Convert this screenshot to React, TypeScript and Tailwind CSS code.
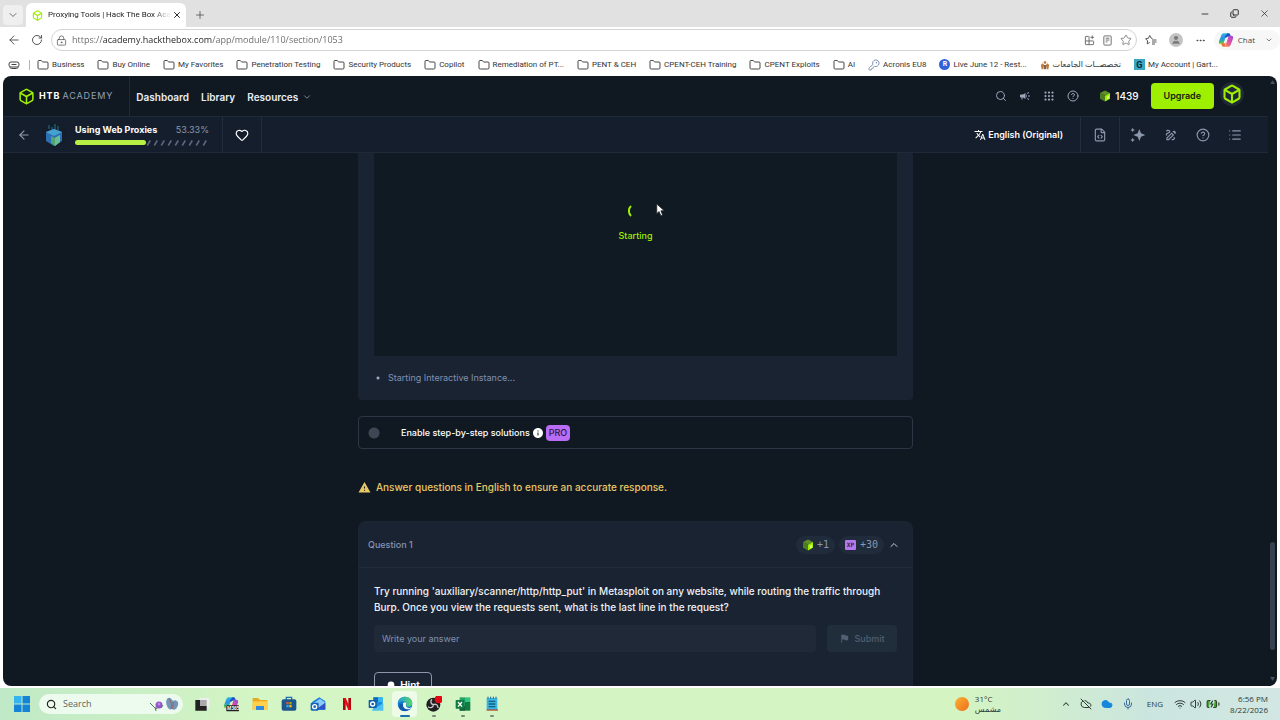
import { type ReactNode } from 'react'
import { BatteryCharging, Box, ChevronDown, ChevronUp, CircleHelp, Cloud, CloudOff, Ellipsis, FileCode, Folder, Grip, Heart, List, Mic, Minus, Plus, RotateCw, Search, Star, Volume2, Wifi, X, ArrowLeft, LockKeyhole, Copy, KeyRound, User } from 'lucide-react'
import { MdCampaign, MdFlag, MdInfo, MdOutlineDraw, MdTranslate, MdWarning } from 'react-icons/md'

const folders = ['Business', 'Buy Online', 'My Favorites', 'Penetration Testing', 'Security Products', 'Copilot', 'Remediation of PT...', 'PENT & CEH', 'CPENT-CEH Training', 'CPENT Exploits', 'AI']

function IconBtn({ label, children, className = '' }: { label: string; children: ReactNode; className?: string }) {
  return <button type="button" aria-label={label} className={`grid shrink-0 place-items-center ${className}`}>{children}</button>
}

function Cube({ className = '' }: { className?: string }) {
  return (
    <svg viewBox="0 0 24 24" className={className}>
      <path d="M12 1l10 5.200-10 5.400L2 6.200z" fill="#5f8f2a" />
      <path d="M2 6.200l10 5.400V23L2 17.500z" fill="#4d7d22" />
      <path d="M22 6.200l-10 5.400V23l10-5.500z" fill="#9fef00" />
      <path d="M16 13.500l4-2.200v5.200l-4 2.300z" fill="#e0ff8a" />
    </svg>
  )
}

function CopilotLogo({ className = '' }: { className?: string }) {
  return (
    <svg viewBox="0 0 24 24" className={className}>
      <defs>
        <linearGradient id="copA" x1="0" y1="0" x2="0" y2="1"><stop stopColor="#28b5e8" /><stop offset=".5" stopColor="#2f8fe0" /><stop offset=".8" stopColor="#35c06b" /><stop offset="1" stopColor="#e8c93a" /></linearGradient>
        <linearGradient id="copB" x1="1" y1="0" x2="0" y2="1"><stop stopColor="#8a4be8" /><stop offset=".5" stopColor="#e44fa0" /><stop offset="1" stopColor="#ff9a3c" /></linearGradient>
      </defs>
      <path d="M16 2H8.500C6.500 2 5.300 3.500 4.700 5.500L1.500 14c-.9 3 .4 4.500 2.500 4.500H8l4-12.500c.5-1.600 1.700-4 4-4z" fill="url(#copA)" />
      <path d="M14 2h1.500c1.700 0 2.600 1 3 2.500L19.300 7H15c-2 0-2.600 1-3 2.200l-2-2z" fill="#1d4fc4" />
      <path d="M8 22h7.500c2 0 3.200-1.500 3.800-3.500L22.500 10c.9-3-.4-4.500-2.500-4.500H16l-4 12.500c-.5 1.600-1.700 4-4 4z" fill="url(#copB)" />
      <path d="M10 22H8.500c-1.700 0-2.600-1-3-2.500L5 17h4c2 0 2.400-1 3-2.500z" fill="#f0703a" />
    </svg>
  )
}

function Bookmark({ icon, children, dir }: { icon: ReactNode; children: ReactNode; dir?: 'rtl' }) {
  return (
    <a href="#" className="flex shrink-0 items-center gap-[3px] text-[#333]">
      {icon}
      <span dir={dir}>{children}</span>
    </a>
  )
}

function BrowserChrome() {
  return (
    <header className="shrink-0 bg-white font-['Open_Sans','Noto_Sans','DejaVu_Sans',sans-serif] text-[8px] text-[#444]">
      <div className="flex h-[27px] items-end justify-between bg-[#e1e1e1]">
        <div className="flex h-6 items-center">
          <IconBtn label="Tab actions" className="ml-[3px] mr-[3px] h-5 w-5 rounded bg-[#efefef]"><ChevronDown className="h-3 w-3" strokeWidth={1.500} /></IconBtn>
          <div className="flex h-full w-40 items-center rounded-t-md bg-white pl-[6px] pr-1 font-[Roboto,sans-serif] text-[#222]">
            <Box className="h-[11px] w-[11px] shrink-0 text-[#9fef00]" strokeWidth={2.500} />
            <span className="ml-[5px] flex-1 whitespace-nowrap [mask-image:linear-gradient(90deg,#000_85%,transparent)]">Proxying Tools | Hack The Box Aca</span>
            <IconBtn label="Close tab" className="h-3 w-3 text-black"><X className="h-[10px] w-[10px]" /></IconBtn>
          </div>
          <IconBtn label="New tab" className="ml-2 h-3 w-3"><Plus className="h-3 w-3" strokeWidth={1.500} /></IconBtn>
        </div>
        <div className="flex h-full items-center gap-5 pr-[10px] text-[#222]">
          <IconBtn label="Minimize"><Minus className="h-[10px] w-[10px]" /></IconBtn>
          <IconBtn label="Restore"><Copy className="h-[9px] w-[9px] -scale-y-100" strokeWidth={2.500} /></IconBtn>
          <IconBtn label="Close"><X className="h-[11px] w-[11px]" strokeWidth={1.500} /></IconBtn>
        </div>
      </div>

      <div className="flex h-[26px] items-center pl-[7px]">
        <IconBtn label="Back"><ArrowLeft className="h-[14px] w-[14px]" strokeWidth={1.500} /></IconBtn>
        <IconBtn label="Refresh" className="ml-[10px]"><RotateCw className="h-3 w-3" strokeWidth={1.800} /></IconBtn>
        <div className="ml-2 flex h-[22px] flex-1 items-center rounded-full border border-[#d4d4d4] pl-1 pr-1">
          <LockKeyhole className="h-[11px] w-[11px] shrink-0" strokeWidth={1.500} />
          <input aria-label="Address" defaultValue="https://academy.hackthebox.com/app/module/110/section/1053"
            className="ml-[5px] min-w-0 flex-1 bg-[linear-gradient(90deg,#666_31px,#222_31px_140px,#666_140px)] bg-clip-text text-[9px] text-transparent outline-none" />
          <div className="flex gap-[7px] text-[#666]">
            <IconBtn label="Apps">
              <svg viewBox="0 0 24 24" className="h-[11px] w-[11px]" fill="none" stroke="currentColor" strokeWidth="2"><path d="M10 3H4a1 1 0 0 0-1 1v16a1 1 0 0 0 1 1h16a1 1 0 0 0 1-1v-6a1 1 0 0 0-1-1H3M11 3v18M18 1v8M14 5h8" /></svg>
            </IconBtn>
            <IconBtn label="Reader">
              <svg viewBox="0 0 24 24" className="h-[11px] w-[11px]" fill="none" stroke="currentColor" strokeWidth="2"><rect x="4" y="2" width="16" height="20" rx="2" /><path d="M8 7h8M8 11h8M8 15h4" /></svg>
            </IconBtn>
            <IconBtn label="Favorite"><Star className="h-3 w-3" strokeWidth={1.500} /></IconBtn>
          </div>
        </div>
        <div className="flex items-center gap-3 pl-2">
          <IconBtn label="Favorites">
            <svg viewBox="0 0 24 24" className="h-3 w-3" fill="none" stroke="currentColor" strokeWidth="1.800" strokeLinejoin="round"><path d="M15 9l-2.500-.5L9.500 3 6.700 8.500l-5.500 1 4 4.200-.8 6L9.500 17M14 12h9M14 16h9M14 20h6" /></svg>
          </IconBtn>
          <IconBtn label="Profile" className="h-[14px] w-[14px] overflow-hidden rounded-full bg-[#c4c4c4] text-[#7b7b7b]"><User className="h-[10px] w-[10px]" fill="currentColor" /></IconBtn>
          <IconBtn label="More"><Ellipsis className="h-[11px] w-[11px]" /></IconBtn>
        </div>
        <button type="button" className="ml-2 flex h-5 items-center rounded-full bg-[#f7f7f7] pl-1 pr-[7px]">
          <CopilotLogo className="h-4 w-4" />
          <span className="ml-1">Chat</span>
          <ChevronDown className="ml-[10px] h-2 w-2" />
        </button>
      </div>

      <nav className="flex h-[23px] items-center gap-[13px] overflow-hidden whitespace-nowrap pl-2 font-[Roboto,'DejaVu_Sans',sans-serif]">
        <IconBtn label="Workspaces" className="-mr-1">
          <svg viewBox="0 0 24 24" className="h-3 w-3" fill="none" stroke="currentColor" strokeWidth="2"><rect x="2" y="6" width="20" height="10" rx="4" /><path d="M7 11h10M4 16c0 2 1 3 3 3h10c2 0 3-1 3-3" /></svg>
        </IconBtn>
        <span className="-mr-[6px] h-[10px] w-px bg-[#b5b5b5]" />
        {folders.map((f) => (
          <Bookmark key={f} icon={<Folder className="h-3 w-3" strokeWidth={1.800} />}>{f}</Bookmark>
        ))}
        <Bookmark icon={<KeyRound className="h-3 w-3 text-[#7e8fb3]" />}>Acronis EU8</Bookmark>
        <Bookmark icon={<span className="grid h-[11px] w-[11px] place-items-center rounded-full bg-[#2f62d9] text-[7px] font-bold text-white">R</span>}>Live June 12 - Rest...</Bookmark>
        <Bookmark dir="rtl" icon={<svg viewBox="0 0 12 12" className="h-[10px] w-[10px]"><path d="M6 1l2 2-2 2-2-2zM3 4l2 2-1 5H2L1 6zM9 4L7 6l1 5h2l1-5z" fill="#c07a3a" /><path d="M5 6h2v5H5z" fill="#5b4a3c" /></svg>}>تخصصــات الجامعات</Bookmark>
        <Bookmark icon={<span className="grid h-[11px] w-[11px] place-items-center bg-[#3aa6c4] text-[9px] font-bold text-[#06263c]">G</span>}>My Account | Gart...</Bookmark>
      </nav>
    </header>
  )
}

function SiteHeader() {
  return (
    <header className="flex h-[41px] shrink-0 items-center border-b border-[#1f2a38]">
      <a href="#" className="flex h-full items-center border-r border-[#1f2a38] pl-[15px] pr-4 text-[9px] tracking-widest">
        <Box className="mr-1 h-[17px] w-[17px] text-[#9fef00]" strokeWidth={2.200} />
        <b className="mr-[2px] text-white">HTB</b><span className="text-[#94a0b5]">ACADEMY</span>
      </a>
      <nav className="flex items-center gap-3 pl-[6px] pt-[2px] text-[10px] font-semibold text-[#e8edf5]">
        <a href="#">Dashboard</a>
        <a href="#">Library</a>
        <button type="button" className="flex items-center gap-1">Resources <ChevronDown className="h-[10px] w-[10px] text-[#8b97ab]" /></button>
      </nav>
      <div className="ml-auto flex items-center gap-3 pr-6 text-[#9aa6ba]">
        <IconBtn label="Search"><Search className="h-3 w-3" /></IconBtn>
        <IconBtn label="News"><MdCampaign className="h-3 w-3" /></IconBtn>
        <IconBtn label="Apps"><Grip className="h-3 w-3" strokeWidth={2.500} /></IconBtn>
        <IconBtn label="Help"><CircleHelp className="h-3 w-3" /></IconBtn>
        <span className="ml-2 flex items-center gap-1 text-[10px] font-medium text-white"><Cube className="h-3 w-3" />1439</span>
        <button type="button" className="h-[26px] rounded-sm bg-[#9fef00] px-[13px] text-[9px] font-semibold text-[#16240b]">Upgrade</button>
        <IconBtn label="Account" className="-ml-[6px] mb-1 h-6 w-6 rounded-full bg-[#1f2937] text-[#9fef00]"><Box className="h-5 w-5" strokeWidth={2.500} /></IconBtn>
      </div>
    </header>
  )
}

function ModuleBar() {
  return (
    <div className="flex h-9 shrink-0 items-center border-b border-[#1f2a38] bg-[#151e2d] text-[#8b97ab]">
      <IconBtn label="Back" className="ml-[14px]"><ArrowLeft className="h-[14px] w-[14px]" /></IconBtn>
      <svg viewBox="0 0 24 24" className="ml-[11px] h-6 w-6">
        <circle cx="12" cy="12" r="12" fill="#141d29" />
        <path d="M7 2v4M10 4v3M13 1v5M16 3v4" stroke="#20697d" strokeWidth="1.200" />
        <path d="M12 6l8 3v9l-8 5-8-5V9z" fill="#2d6fb5" />
        <path d="M12 6l8 3-8 4-8-4z" fill="#45a1cf" />
        <path d="M9 13l4 2 5-3v7l-5 4-4-3z" fill="#4fa673" />
        <path d="M13 15l5-3v7l-5 4z" fill="#69bd97" />
      </svg>
      <div className="ml-[9px] w-[134px]">
        <div className="flex justify-between text-[9px] leading-3">
          <span className="font-bold text-white">Using Web Proxies</span><span>53.33%</span>
        </div>
        <div role="progressbar" aria-label="Module progress" aria-valuenow={53} className="mt-1 flex h-[6px] items-center">
          <div className="h-[5px] rounded-full bg-[#b5f043]" style={{ width: '53.330%' }} />
          <svg viewBox="0 0 62 6" className="h-[6px] flex-1" stroke="#5d6b80" strokeWidth="1.500">
            {[0, 1, 2, 3, 4, 5, 6, 7, 8].map((i) => <path key={i} d={`M${i * 7 + 1} 5.500l3-5`} />)}
          </svg>
        </div>
      </div>
      <div className="ml-[13px] flex h-full items-center border-x border-[#222d3d] px-3">
        <IconBtn label="Like"><Heart className="h-[14px] w-[14px] text-white" /></IconBtn>
      </div>
      <div className="ml-auto flex h-full items-center">
        <button type="button" className="mr-[17px] flex items-center gap-[2px] text-[9px] font-semibold text-white"><MdTranslate className="h-3 w-3" />English (Original)</button>
        <div className="flex h-full items-center border-x border-[#222d3d] px-3">
          <IconBtn label="Cheat sheet"><FileCode className="h-[14px] w-[14px]" /></IconBtn>
        </div>
        <div className="flex items-center gap-[18px] pl-[10px] pr-[26px]">
          <IconBtn label="Assistant">
            <svg viewBox="0 0 24 24" className="h-4 w-4" fill="currentColor"><path d="M14 3l2.500 6.500L23 12l-6.500 2.500L14 21l-2.500-6.500L5 12l6.500-2.500zM4 1l1 2.500L7.500 4.500 5 5.500 4 8 3 5.500.5 4.500 3 3.500zM4 16l1 2.500 2.500 1L5 20.500 4 23l-1-2.500-2.500-1 2.500-1z" /></svg>
          </IconBtn>
          <IconBtn label="Notes"><MdOutlineDraw className="h-[14px] w-[14px]" /></IconBtn>
          <IconBtn label="Help"><CircleHelp className="h-[14px] w-[14px]" /></IconBtn>
          <IconBtn label="Contents"><List className="h-[14px] w-[14px]" /></IconBtn>
        </div>
      </div>
    </div>
  )
}

function Instance() {
  return (
    <section className="rounded-b bg-[#1a2332] px-4">
      <div className="relative flex h-[203px] flex-col items-center bg-[#101a23] pt-[52px] text-[#9fef00]">
        <svg viewBox="0 0 12 12" className="mr-[10px] h-3 w-3" fill="none" stroke="currentColor" strokeWidth="2"><path d="M6 1C3.200 3.500 3.200 8.500 6 11" /></svg>
        <span className="mt-3 text-[9px] font-medium">Starting</span>
        <svg viewBox="0 0 12 18" className="absolute left-[282px] top-[50px] h-[14px] w-[9px]"><path d="M1 1v13l3-3 2.500 5.500 2.300-1L6.500 10H11z" fill="#fff" stroke="#222" /></svg>
      </div>
      <p className="flex h-11 items-center gap-[6px] text-[9px] text-[#8291b0]">
        <span className="mx-[2px] h-1 w-1 rounded-full border border-[#46536a] bg-[#c6d0e2]" />Starting Interactive Instance...
      </p>
    </section>
  )
}

function Question() {
  return (
    <section className="mt-[26px] rounded-t-lg border border-b-0 border-[#1b2533] bg-[#1a2332]">
      <div className="ml-[9px] mr-3 flex h-[45px] items-center">
        <h2 className="text-[9px] font-medium text-[#8593b3]">Question 1</h2>
        <div className="ml-auto flex items-center gap-1 font-['DejaVu_Sans_Mono',monospace] text-[10px] text-[#8b97ab]">
          <span className="flex h-[18px] items-center gap-[3px] rounded-full bg-[#202b3b] px-[6px]"><Cube className="h-3 w-3" />+1</span>
          <span className="flex h-[18px] items-center gap-1 rounded-full bg-[#202b3b] px-[6px]">
            <span className="grid h-[10px] w-[11px] place-items-center rounded-[1px] bg-[#b678ee] text-[6px] font-bold text-[#32204a]">XP</span>+30
          </span>
          <IconBtn label="Collapse"><ChevronUp className="h-3 w-3 text-[#c4cddc]" /></IconBtn>
        </div>
      </div>
      <div className="border-t border-[#202b3b] px-[15px] pt-[15px]">
        <label htmlFor="answer" className="block text-[10px] font-medium leading-4 text-[#eef2f8]">
          Try running 'auxiliary/scanner/http/http_put' in Metasploit on any website, while routing the traffic through Burp. Once you view the requests sent, what is the last line in the request?
        </label>
        <div className="mt-[10px] flex gap-[11px]">
          <input id="answer" placeholder="Write your answer" className="h-[27px] min-w-0 flex-1 rounded-sm bg-[#1f2937] px-2 text-[9px] outline-none placeholder:text-[#8291b0]" />
          <button type="button" className="flex h-[27px] w-[70px] items-center justify-center gap-1 rounded-sm bg-[#202d3b] text-[9px] font-medium text-[#526074]"><MdFlag className="h-[11px] w-[11px]" />Submit</button>
        </div>
        <button type="button" className="mt-5 flex h-[27px] w-[58px] items-center justify-center gap-1 rounded-sm border border-[#8b97ab] text-[10px] font-semibold text-white">
          <svg viewBox="0 0 12 12" className="h-[10px] w-[10px]" fill="currentColor"><circle cx="6" cy="4.500" r="4" /><path d="M4 9h4v2H4z" /></svg>Hint
        </button>
      </div>
    </section>
  )
}

function Site() {
  return (
    <div className="mx-[3px] mb-[2px] flex min-h-0 flex-1 overflow-hidden rounded-lg bg-[#101922] font-[Inter,'Liberation_Sans',sans-serif]">
      <div className="flex min-w-0 flex-1 flex-col">
        <SiteHeader />
        <ModuleBar />
        <main className="min-h-0 flex-1 overflow-hidden">
          <div className="mx-auto max-w-[555px]">
            <Instance />
            <div className="mt-4 flex h-[33px] items-center rounded border border-[#2b3745] px-[9px] text-[9px] font-medium text-white">
              <input id="steps" type="checkbox" role="switch" className="h-3 w-[24px] appearance-none rounded-full bg-[radial-gradient(circle_at_6px_6px,#3d4653_5px,transparent_6px)]" />
              <label htmlFor="steps" className="ml-[9px]">Enable step-by-step solutions</label>
              <MdInfo className="ml-[2px] h-3 w-3" />
              <span className="ml-[2px] rounded-sm bg-[#b96cf5] px-[3px] leading-4 text-[#2c1546]">PRO</span>
            </div>
            <p className="mt-[30px] flex items-center gap-[5px] text-[10px] font-medium leading-4 text-[#e8c765]"><MdWarning className="h-[13px] w-[13px]" />Answer questions in English to ensure an accurate response.</p>
            <Question />
          </div>
        </main>
      </div>
      <div className="flex w-[9px] shrink-0 flex-col items-center justify-between py-1 text-[5px] leading-none text-[#465362]">
        <span>▲</span>
        <div className="mt-[430px] h-[108px] w-[5px] rounded-full bg-[#36424f]" />
        <span>▼</span>
      </div>
    </div>
  )
}

// Taskbar app icons, all drawn on a 24 grid
const apps: { name: string; icon: ReactNode; running?: boolean; active?: boolean }[] = [
  { name: 'Task view', icon: <><path d="M8 3h15v14H8z" fill="#eee" /><path d="M2 6h7v9h10v7H2z" fill="#222" /><path d="M9 6h10v9H9z" fill="#aaa" /></> },
  { name: 'Microsoft 365 Copilot', icon: <><CopilotLogo /><rect x="5" y="14" width="19" height="9" rx="1" fill="#222" /><text x="6" y="21.500" fontSize="7" fontWeight="700" fill="#fff">M365</text></> },
  { name: 'File Explorer', icon: <><path d="M1 3h8l3 3h11v15H1z" fill="#e8a91c" /><path d="M1 8h22v13H1z" fill="#ffd04e" /><path d="M6 15h12v6H6z" fill="#2f8be0" /></> },
  { name: 'Microsoft Store', icon: <><path d="M8 6V2h8v4" fill="none" stroke="#1f6fb5" strokeWidth="2" /><rect x="1" y="5" width="22" height="17" rx="3" fill="#1d568c" /><path d="M8 9h3.500v3.500H8z" fill="#f25022" /><path d="M12.500 9H16v3.500h-3.500z" fill="#7fba00" /><path d="M8 13.500h3.500V17H8z" fill="#29a8ea" /><path d="M12.500 13.500H16V17h-3.500z" fill="#ffb900" /></> },
  { name: 'Outlook', icon: <><path d="M3 9l11-7 9 6v13H8z" fill="#1a7ee0" /><path d="M6 10l9-6 8 6-10 8z" fill="#8ccaf7" /><path d="M8 21l15-11v10H8z" fill="#3153c7" /><rect x="1" y="10" width="12" height="12" rx="2" fill="#1464b8" /><circle cx="7" cy="16" r="3" fill="none" stroke="#fff" strokeWidth="2" /></> },
  { name: 'Netflix', icon: <><path d="M6 3h4v18H6zM14 3h4v18h-4z" fill="#b1060f" /><path d="M6 3h4l8 18h-4z" fill="#e50914" /></> },
  { name: 'Outlook classic', icon: <><path d="M8 2h14v19H8z" fill="#1490df" /><path d="M8 2h7v7H8z" fill="#0f6cbd" /><path d="M15 2h7v7h-7z" fill="#35b8f1" /><path d="M6 21l17-10v11H6z" fill="#50c0f0" /><rect x="1" y="6" width="12" height="12" rx="1" fill="#0f5ea8" /><circle cx="7" cy="12" r="3" fill="none" stroke="#fff" strokeWidth="2" /></> },
  { name: 'Edge', active: true, icon: <><defs><linearGradient id="edgeG" x1="0" y1="0" x2="1" y2="0"><stop stopColor="#1e9de0" /><stop offset="1" stopColor="#5ad565" /></linearGradient></defs><circle cx="12" cy="12" r="11" fill="#1479cc" /><path d="M1 11C2 4 7 1 12 1c7 0 11 5 11 9 0 4-3 6-6 6-2 0-4-1-3-3 1-3-2-5-5-5-4 0-7 2-8 3z" fill="url(#edgeG)" /><path d="M9 11c-2 5 2 10 8 9 2 0 4-1 5-3-3 2-6 1-7.500-.5C13 15 13 13 14 12c0-3-3-4-5-1z" fill="#e7f7ef" /><path d="M9 12c-1 5 3 9 9 8-5 5-14 2-15-4 0-3 2-5 6-4z" fill="#1457a6" /></> },
  { name: 'OBS Studio', running: true, icon: <><circle cx="11" cy="13" r="10.500" fill="#1f1f22" /><path d="M11 13c-4-1-5-5-2-8M11 13c4-2 7 1 7 5M11 13c0 4-4 6-8 3" fill="none" stroke="#c8c8c8" strokeWidth="2" /><circle cx="19" cy="5" r="6" fill="#e30613" /></> },
  { name: 'Excel', running: true, icon: <><path d="M7 2h8v20H7z" fill="#21a366" /><path d="M15 2h8v7h-8z" fill="#33c481" /><path d="M15 9h8v13h-8z" fill="#107c41" /><path d="M7 15h8v7H7z" fill="#185c37" /><rect x="1" y="6" width="13" height="13" rx="1" fill="#107c41" /><path d="M4.500 9l6 7M10.500 9l-6 7" stroke="#fff" strokeWidth="2" /></> },
  { name: 'Notepad', running: true, icon: <><path d="M4 3h16v18H4z" fill="#3bb3e3" /><path d="M4 20h17v2H4z" fill="#b04a32" /><path d="M6 1v3M10 1v3M14 1v3M18 1v3" stroke="#1d6584" strokeWidth="1.500" /><path d="M7 8h10M7 12h10M7 16h10" stroke="#12617f" strokeWidth="2" /></> },
]

function Taskbar() {
  return (
    <footer className="flex h-8 shrink-0 items-center bg-[linear-gradient(90deg,#bfe9c6,#d4f5c4_20%,#d4f4c2_75%,#cbe5df_90%,#d2e7e3)] font-['Open_Sans','Noto_Sans','DejaVu_Sans',sans-serif] text-[8px] text-[#2e3b36]">
      <IconBtn label="Start" className="ml-[14px]">
        <svg viewBox="0 0 16 16" className="h-4 w-4" fill="#1583d6"><path d="M0 0h7.500v7.500H0z" fill="#35b5ef" /><path d="M8.500 0H16v7.500H8.500zM0 8.500h7.500V16H0zM8.500 8.500H16V16H8.500z" /></svg>
      </IconBtn>
      <label className="ml-[9px] flex h-5 w-36 items-center rounded-full bg-[#edfaee] pl-[7px] pr-1">
        <Search className="h-[11px] w-[11px] shrink-0 text-[#222]" strokeWidth={2.500} />
        <input aria-label="Search" placeholder="Search" className="ml-[6px] min-w-0 flex-1 text-[9px] outline-none placeholder:text-[#5c6661]" />
        <svg viewBox="0 0 30 16" className="h-4 w-[30px] shrink-0">
          <path d="M1 7l6 6 4-3M7 15l-1-4M12 12l2-3" fill="none" stroke="#45814e" />
          <circle cx="10" cy="9" r="3.500" fill="#9356c7" /><circle cx="10" cy="8" r="1.500" fill="#b88ae0" />
          <path d="M18 10c-2-5 0-9 3-8 1 0 2 2 3 3 3-2 6 1 5 4-1 4-4 6-6 4-2 1-4 0-5-3z" fill="#7396b8" /><path d="M20 3c2 2 3 6 3 10M24 6c1 1 0 4-1 6" fill="none" stroke="#a3605d" />
        </svg>
      </label>
      <div className="ml-[6px] flex items-center gap-1">
        {apps.map((a) => (
          <button key={a.name} type="button" aria-label={a.name} className={`relative grid h-[26px] w-[25px] place-items-center rounded-sm ${a.active ? 'bg-[#effbe9]' : ''}`}>
            <svg viewBox="0 0 24 24" className="h-4 w-4">{a.icon}</svg>
            {(a.active || a.running) && <span className={`absolute bottom-0 h-[2px] rounded-full ${a.active ? 'w-[10px] bg-[#1a6fb0]' : 'w-1 bg-[#7c8a78]'}`} />}
          </button>
        ))}
      </div>
      <div className="ml-auto flex items-center gap-[6px]">
        <span className="h-[14px] w-[14px] rounded-full bg-gradient-to-br from-[#f9b233] to-[#ee6c1b]" />
        <div className="w-10 leading-[10px]"><p>31°C</p><p>مشمس</p></div>
      </div>
      <div className="ml-[46px] flex items-center gap-[9px]">
        <ChevronUp className="h-[10px] w-[10px]" strokeWidth={2.500} />
        <CloudOff className="h-3 w-3" />
        <Cloud className="h-3 w-3 text-[#1787dc]" fill="currentColor" />
        <Mic className="h-3 w-3 text-[#3a6c9c]" />
        <span className="ml-1">ENG</span>
        <div className="flex items-center gap-1 pl-[2px]">
          <Wifi className="h-3 w-3" />
          <Volume2 className="h-3 w-3" />
          <BatteryCharging className="h-[14px] w-[14px] text-[#2c4a28]" fill="#4ba33e" />
        </div>
      </div>
      <div className="ml-[10px] mr-3 text-right leading-[11px]"><p>6:56 PM</p><p>8/22/2026</p></div>
    </footer>
  )
}

export default function App() {
  return (
    <div className="flex h-screen flex-col overflow-hidden bg-white">
      <BrowserChrome />
      <Site />
      <Taskbar />
    </div>
  )
}
